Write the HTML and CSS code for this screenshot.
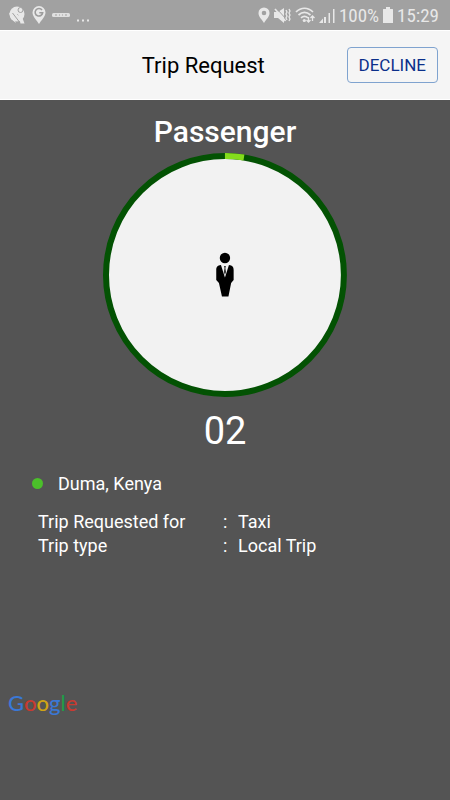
FILE: index.html
```html
<!DOCTYPE html>
<html lang="en">
<head>
<meta charset="utf-8">
<meta name="viewport" content="width=device-width, initial-scale=1">
<title>Trip Request</title>
<link rel="stylesheet" href="styles.css">
</head>
<body>
<div class="status">
  <div class="status-left">
    <svg width="18" height="20" viewBox="0 0 18 20" aria-hidden="true">
      <circle cx="9" cy="9" r="7.500" fill="#e8e8e8"/>
      <path d="M1 7.500 5 11 8 18 3 14Z" fill="#e8e8e8"/>
      <path d="M4.500 8 13 19M9.500 9 14 14" stroke="#a1a1a1" stroke-width="1"/>
      <path d="M10 9 12.500 18.500h4L13 9Z" fill="#e8e8e8"/>
      <circle cx="12.500" cy="5" r="2.500" fill="#e8e8e8" stroke="#a1a1a1" stroke-width="1"/>
    </svg>
    <svg width="14" height="20" viewBox="0 0 14 20" aria-hidden="true">
      <path d="M7 19C5 15.500.500 11.500.500 7.500a6.500 6.500 0 0 1 13 0C13.500 11.500 9 15.500 7 19Z" fill="#e8e8e8"/>
      <path d="M10 5A3.800 3.800 0 1 0 10.700 7.700H7.300" fill="none" stroke="#9c9c9c" stroke-width="1.600"/>
    </svg>
    <svg width="18" height="6" viewBox="0 0 18 6" aria-hidden="true">
      <rect y="1" width="18" height="4" rx="1.500" fill="#e0e0e0"/>
      <path d="M3 3h2M7 3h1M10 3h1M13 3h2" stroke="#a1a1a1"/>
    </svg>
    <svg width="14" height="20" viewBox="0 0 14 20" fill="#e8e8e8" aria-hidden="true">
      <path d="M1 14.500h2v2H1zM6 14.500h2v2H6zM11 14.500h2v2h-2z"/>
    </svg>
  </div>
  <div class="status-right">
    <svg width="12" height="18" viewBox="0 0 12 18" aria-hidden="true">
      <path fill-rule="evenodd" d="M6 17C4 13.500.500 11 .500 7a5.500 5.500 0 0 1 11 0C11.500 11 8 13.500 6 17ZM6 4.700a2.300 2.300 0 1 0 0 4.600 2.300 2.300 0 0 0 0-4.600Z" fill="#e8e8e8"/>
    </svg>
    <svg width="17" height="18" viewBox="0 0 17 18" aria-hidden="true">
      <path d="M0 6h4l6-4v15l-6-5H0Z" fill="#e8e8e8"/>
      <path d="M3 3 13 14" stroke="#a1a1a1" stroke-width="1"/>
      <path d="M1 3 11.500 15" stroke="#e8e8e8" stroke-width="1.600"/>
      <path d="m12 4 1 2-1 2 1 2-1 2 1 2M15 3l1 2-1 2 1 2-1 2 1 2-1 2" fill="none" stroke="#e8e8e8" stroke-width="1.300"/>
    </svg>
    <svg width="20" height="18" viewBox="0 0 20 18" aria-hidden="true">
      <path d="M1 6c5-5 12-5 17 0M3.500 9c4-3.500 8-3.500 12 0M6 11.800c2.500-2 4.500-2 7 0" fill="none" stroke="#e8e8e8" stroke-width="1.700"/>
      <circle cx="9.300" cy="14.500" r="1.600" fill="#e8e8e8"/>
      <path d="M13.500 11v5m-2-2 2 2 2-2M17.500 15v-5m-2 2 2-2 2 2" fill="none" stroke="#e8e8e8" stroke-width="1.300"/>
    </svg>
    <svg width="16" height="18" viewBox="0 0 16 18" fill="#e8e8e8" aria-hidden="true">
      <path d="M0 17 4 12.500V17zM5 11h2v6H5zM9.500 7h1.500v10H9.500zM14 3h1.500v14H14z"/>
    </svg>
    <span>100%</span>
    <svg width="10" height="18" viewBox="0 0 10 18" fill="#e8e8e8" aria-hidden="true">
      <path d="M3 1h4v2h2.500a.500.500 0 0 1 .500.500V17H0V3.500A.500.500 0 0 1 .500 3H3Z"/>
    </svg>
    <time>15:29</time>
  </div>
</div>
<header class="bar">
  <h1>Trip Request</h1>
  <button class="decline" type="button">DECLINE</button>
</header>
<main>
  <h2>Passenger</h2>
  <svg class="dial" viewBox="0 0 244 244" role="img" aria-label="Passenger countdown">
    <circle cx="122" cy="122" r="119" fill="#f2f2f2" stroke="#035203" stroke-width="6"/>
    <path d="M122 3A119 119 0 0 1 141 4.500" fill="none" stroke="#84dc1c" stroke-width="6"/>
    <circle cx="122" cy="105" r="5.200" fill="#000"/>
    <path d="M118 112 122 124.500 126 112C129.500 112.500 130.700 114 130.700 117V127L128.200 130 125.500 143.500H119L116 130 113.300 127V117C113.300 114 114.500 112.500 118 112Z" fill="#000"/>
    <path d="M121 113h2l-.500 2 .600 4-1.100 3-1.100-3 .600-4Z" fill="#333"/>
  </svg>
  <p class="count">02</p>
  <p class="place"><span class="dot"></span>Duma, Kenya</p>
  <dl>
    <dt>Trip Requested for</dt><dd>Taxi</dd>
    <dt>Trip type</dt><dd>Local Trip</dd>
  </dl>
  <footer class="brand"><span class="blue">G</span><span class="red">o</span><span class="yellow">o</span><span class="blue">g</span><span class="green">l</span><span class="red">e</span></footer>
</main>
</body>
</html>
```
FILE: styles.css
```css
* {
  box-sizing: border-box;
}

body {
  margin: 0;
  min-height: 100vh;
  display: flex;
  flex-direction: column;
  background: #545454;
  color: #fff;
  font-family: Roboto, sans-serif;
}

h1, h2, p, dl, dd {
  margin: 0;
}

svg {
  flex: none;
}

.status {
  height: 30px;
  padding: 0 11px 0 8px;
  display: flex;
  justify-content: space-between;
  background: #a1a1a1;
  color: #e8e8e8;
  font-family: "Roboto Condensed", Roboto, sans-serif;
  font-size: 19px;
}

.status-left,
.status-right {
  display: flex;
  align-items: center;
}

.status-left {
  gap: 6px;
}

.status-right {
  gap: 4px;
}

.bar {
  height: 70px;
  padding: 0 12px 0 60px;
  display: flex;
  align-items: center;
  background: #f5f5f5;
  border-top: 1px solid #fff;
  border-bottom: 1px solid #fff;
  color: #000;
}

h1 {
  flex: 1;
  text-align: center;
  font-size: 22px;
  font-weight: 400;
}

.decline {
  height: 36px;
  padding: 0 11px;
  border: 1px solid #7fa3cf;
  border-radius: 4px;
  background: transparent;
  color: #0b2f8a;
  font: 17px Roboto, sans-serif;
}

main {
  flex: 1;
  display: flex;
  flex-direction: column;
  padding-top: 11px;
}

h2 {
  text-align: center;
  font-size: 30px;
  line-height: 42px;
  font-weight: 500;
}

.dial {
  display: block;
  width: 54.2%;
  margin: 0 auto;
}

.count {
  margin-top: 12px;
  text-align: center;
  font-size: 38px;
  line-height: 44px;
}

.place {
  margin: 19px 32px 0;
  display: flex;
  align-items: center;
  gap: 15px;
  font-size: 18px;
  line-height: 24px;
}

.dot {
  width: 11px;
  height: 11px;
  border-radius: 50%;
  background: #4bc02a;
}

dl {
  margin: 14px 42px 0 38px;
  display: grid;
  grid-template-columns: 1fr 1fr;
  font-size: 18px;
  line-height: 24px;
}

dd::before {
  content: ":";
  display: inline-block;
  width: 15px;
}

.brand {
  margin-top: auto;
  padding: 0 8px 83px;
  font-family: Lato, sans-serif;
  font-size: 22px;
  font-weight: 500;
  line-height: 28px;
}

.blue { color: #3a78d6; }
.red { color: #c93a30; }
.yellow { color: #d0a414; }
.green { color: #1f9a48; }
```
